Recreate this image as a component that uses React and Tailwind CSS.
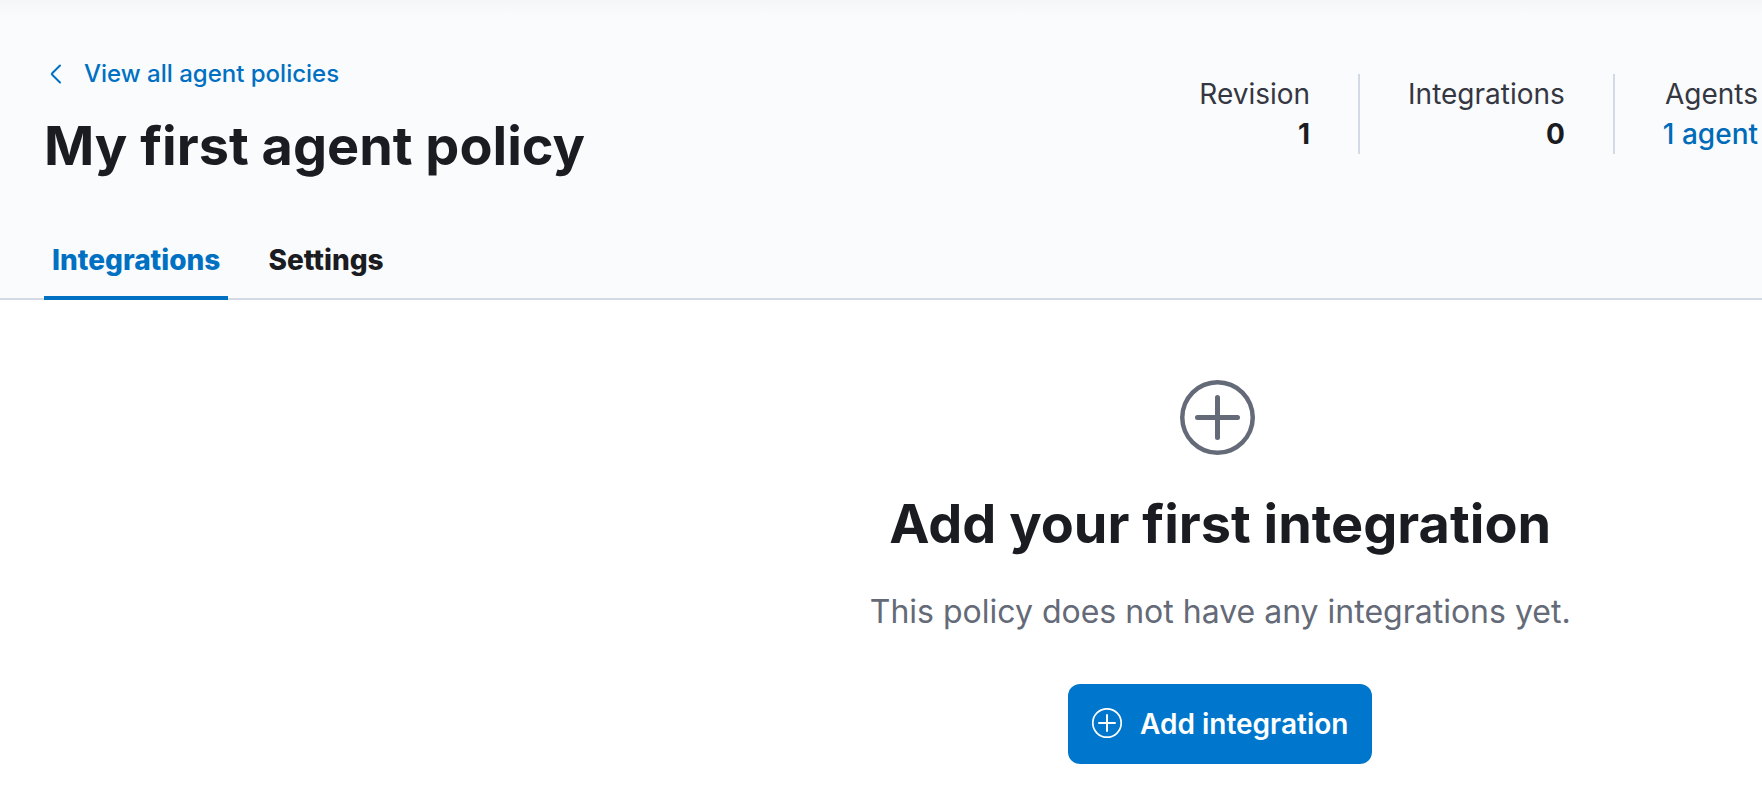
const PLUS =
  'M7.5 0a7.5 7.5 0 1 1 0 15 7.5 7.5 0 0 1 0-15Zm0 .9a6.6 6.6 0 1 0 0 13.2 6.6 6.6 0 0 0 0-13.2Zm0 2.1a.5.5 0 0 1 .5.5V7h3.5a.5.5 0 0 1 0 1H8v3.5a.5.5 0 0 1-1 0V8H3.5a.5.5 0 0 1 0-1H7V3.5a.5.5 0 0 1 .5-.5Z';

function PlusInCircle({ className }) {
  return (
    <svg viewBox="0 0 16 16" fill="currentColor" aria-hidden="true" className={className}>
      <path d={PLUS} />
    </svg>
  );
}

function PlusInCircleThin({ className }) {
  return (
    <svg viewBox="0 0 32 32" fill="none" stroke="currentColor" strokeLinecap="round" aria-hidden="true" className={className}>
      <circle cx="15" cy="15" r="14.2" strokeWidth="1.7" />
      <path d="M15 7v16M7 15h16" strokeWidth="2" />
    </svg>
  );
}

function Stat({ label, children }) {
  return (
    <div className="text-right text-[28px] leading-10">
      <dt className="text-[#343741]">{label}</dt>
      <dd>{children}</dd>
    </div>
  );
}

function Divider() {
  return <div className="w-0.5 self-stretch bg-[#d3dae6]" />;
}

export default function App() {
  return (
    <div className="min-h-screen overflow-x-hidden bg-white font-['Inter','Liberation_Sans',sans-serif] text-[#1a1c21]">
      <header className="border-b-2 border-[#d3dae6] bg-[#fafbfd]">
        <div className="h-4 bg-linear-to-b from-[#f5f6f8] to-[#fafbfd]" />
        <div className="flex items-start justify-between pr-1 pl-11 pt-[34px]">
          <div>
            <a href="#policies" className="flex h-12 items-center gap-4 text-2xl font-medium text-[#0071c2]">
              <svg width="24" height="24" viewBox="0 0 24 24" fill="none" stroke="currentColor" strokeWidth="2" strokeLinecap="round" strokeLinejoin="round" aria-hidden="true">
                <path d="M16 3.5 8.2 11.2Q7.4 12 8.2 12.8L16 20.5" />
              </svg>
              View all agent policies
            </a>
            <h1 className="mt-4 text-[54px] leading-16 font-bold">My first agent policy</h1>
          </div>
          <dl className="mt-6 flex gap-12">
            <Stat label="Revision">
              <span className="font-bold">1</span>
            </Stat>
            <Divider />
            <Stat label="Integrations">
              <span className="font-bold">0</span>
            </Stat>
            <Divider />
            <Stat label="Agents">
              <a href="#agents" className="font-medium text-[#006bb8]">1 agent</a>
            </Stat>
          </dl>
        </div>
        <div role="tablist" className="-mb-0.5 mt-[42px] flex gap-8 pl-11 text-[28px] leading-10 font-extrabold">
          <button type="button" role="tab" aria-selected="true" className="border-b-4 border-[#0071c2] px-2 pt-5 pb-4 text-[#0071c2]">
            Integrations
          </button>
          <button type="button" role="tab" aria-selected="false" className="border-b-4 border-transparent px-2 pt-5 pb-4">
            Settings
          </button>
        </div>
      </header>
      <main className="flex flex-col items-center pt-20 pl-[38.5%] text-center">
        <PlusInCircle className="size-20 text-[#646a77]" />
        <h2 className="mt-8 text-[54px] leading-16 font-bold whitespace-nowrap">Add your first integration</h2>
        <p className="mt-8 text-[32px] leading-12 whitespace-nowrap text-[#646a77]">This policy does not have any integrations yet.</p>
        <button type="button" className="mt-12 flex h-20 items-center gap-4 rounded-xl bg-[#0077cc] px-6 text-[28px] font-semibold text-white">
          <PlusInCircleThin className="size-8" />
          Add integration
        </button>
      </main>
    </div>
  );
}
